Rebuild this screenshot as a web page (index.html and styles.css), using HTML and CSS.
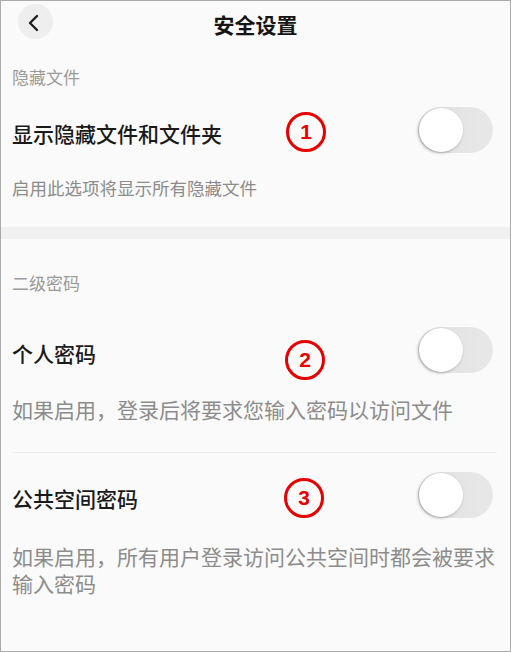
FILE: index.html
```html
<!DOCTYPE html>
<html>
<head>
    <title>安全设置</title>
    <link rel="stylesheet" href="styles.css">
</head>
<body>

<div id="screen">

    <div class="header">
        <button class="back" aria-label="返回">
            <svg width="14" height="18" viewBox="0 0 14 18"><polyline points="10,2 3,9 10,16" fill="none" stroke="#1e1e1e" stroke-width="2.4" stroke-linecap="round" stroke-linejoin="round"/></svg>
        </button>
        <h1>安全设置</h1>
    </div>

    <div class="group-label first">隐藏文件</div>
    <div class="row row-1">
        <span class="row-title">显示隐藏文件和文件夹</span>
        <span class="badge">1</span>
        <span class="toggle"><span class="knob"></span></span>
    </div>
    <div class="desc small">启用此选项将显示所有隐藏文件</div>

    <div class="band"></div>

    <div class="group-label second">二级密码</div>
    <div class="row row-2">
        <span class="row-title">个人密码</span>
        <span class="badge">2</span>
        <span class="toggle"><span class="knob"></span></span>
    </div>
    <div class="desc desc-2">如果启用，登录后将要求您输入密码以访问文件</div>

    <hr class="divider">

    <div class="row row-3">
        <span class="row-title">公共空间密码</span>
        <span class="badge">3</span>
        <span class="toggle"><span class="knob"></span></span>
    </div>
    <div class="desc desc-3">如果启用，所有用户登录访问公共空间时都会被要求输入密码</div>

</div>

</body>
</html>
```

FILE: styles.css
```css
html, body {
  margin: 0;
  padding: 0;
}

body {
  font-family: "Noto Sans CJK SC", "Noto Sans", sans-serif;
  background: #fafafa;
}

#screen {
  box-sizing: border-box;
  width: 511px;
  height: 652px;
  border: 1px solid #ababab;
  background: #fafafa;
  overflow: hidden;
}

.header {
  position: relative;
  height: 43px;
  display: flex;
  align-items: center;
  justify-content: center;
}

.header h1 {
  margin: 0;
  font-size: 21px;
  font-weight: 700;
  color: #151515;
  line-height: 24px;
  padding-top: 2px;
}

.back {
  position: absolute;
  left: 17px;
  top: 3px;
  width: 35px;
  height: 35px;
  border-radius: 50%;
  border: none;
  background: #eeeeee;
  padding: 0;
  display: flex;
  align-items: center;
  justify-content: center;
}

.back svg {
  margin-left: -4px;
  margin-top: 2px;
}

.group-label {
  padding-left: 11px;
  font-size: 17px;
  line-height: 24px;
  color: #9a9a9a;
}

.group-label.first {
  margin-top: 21px;
}

.group-label.second {
  margin-top: 32px;
}

.row {
  position: relative;
  height: 46px;
  display: flex;
  align-items: center;
  justify-content: space-between;
  padding: 0 17px 0 11px;
}

.row-1 {
  margin-top: 18px;
}

.row-2 {
  margin-top: 32px;
}

.row-3 {
  margin-top: 19px;
}

.row-title {
  font-size: 21px;
  font-weight: 500;
  color: #1a1a1a;
  line-height: 28px;
  padding-top: 5px;
}

.badge {
  position: absolute;
  left: 285px;
  top: 5px;
  box-sizing: border-box;
  width: 40px;
  height: 40px;
  border: 3px solid #e80000;
  border-radius: 50%;
  color: #e80000;
  font-family: "Liberation Sans", Arial, sans-serif;
  font-weight: 700;
  font-size: 21px;
  display: flex;
  align-items: center;
  justify-content: center;
}

.row-2 .badge {
  top: 13px;
  left: 284px;
}

.row-3 .badge {
  top: 6px;
  left: 283px;
}

.toggle {
  position: relative;
  width: 75px;
  height: 46px;
  border-radius: 23px;
  background: linear-gradient(to right, #e0e0e0, #e8e8e8);
}

.knob {
  position: absolute;
  left: 1px;
  top: 1px;
  width: 44px;
  height: 44px;
  border-radius: 50%;
  background: #ffffff;
  box-shadow: -1px 1px 3px rgba(0, 0, 0, 0.3);
}

.desc {
  padding: 0 13px 0 11px;
  color: #8c8c8c;
  font-size: 21px;
  line-height: 27px;
}

.desc.small {
  font-size: 17.5px;
  line-height: 24px;
  margin-top: 23px;
}

.desc-2 {
  margin-top: 23px;
}

.desc-3 {
  margin-top: 25px;
}

.band {
  height: 12px;
  margin-top: 27px;
  background: #f0f0f0;
}

.divider {
  border: none;
  height: 1px;
  background: #eeeeee;
  margin: 29px 13px 0 11px;
}
```
